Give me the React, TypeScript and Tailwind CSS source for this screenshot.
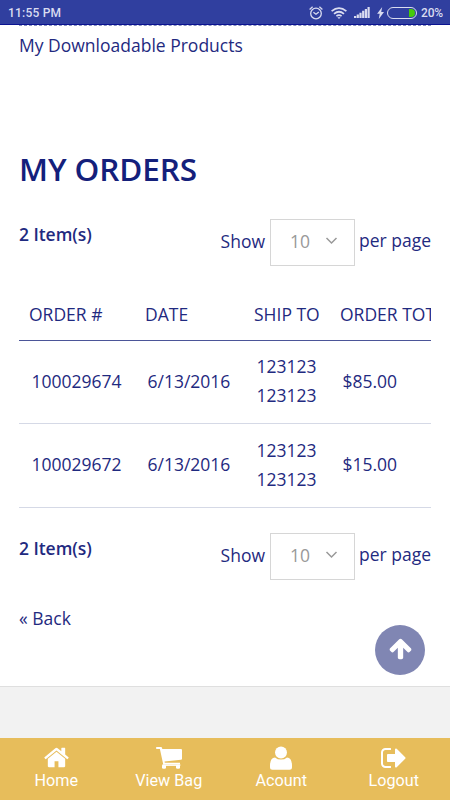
import type { ReactNode } from 'react';

const orders = [
  { id: '100029674', date: '6/13/2016', shipTo: ['123123', '123123'], total: '$85.00' },
  { id: '100029672', date: '6/13/2016', shipTo: ['123123', '123123'], total: '$15.00' },
];

function StatusBar() {
  return (
    <header className="h-[25px] bg-[#303f9f] border-b border-[#0b1391] flex items-center justify-between pl-2 pr-[7px] pt-px font-[Roboto] text-[12px] font-medium text-[#d9dcf0]">
      <span className="tracking-[0.2px]">11:55 PM</span>
      <div className="flex items-center">
        <svg className="w-[14px] h-[14px] mr-[8px]" viewBox="0 0 14 14" fill="none" stroke="currentColor" strokeWidth="1.3">
          <circle cx="7" cy="7.5" r="5.3" />
          <path d="M.6 3.4 3.6 .8M10.4 .8l3 2.6M4.4 6.2 7 8.2l2.8-2.2" />
        </svg>
        <svg className="w-4 h-3 mr-[7px]" viewBox="0 0 16 12" fill="none" stroke="currentColor" strokeWidth="1.7">
          <path d="M.6 4.2Q8-2.1 15.4 4.2M3 6.8q5-4.1 10 0M5.4 9.1q2.6-2 5.2 0" />
          <path d="M6.4 10.2h3.2L8 11.9z" fill="currentColor" stroke="none" />
        </svg>
        <svg className="w-4 h-[11px] mr-[7px]" viewBox="0 0 16 11" fill="currentColor">
          <path d="M0 9h2.2v2H0zM2.7 7.5h2.2V11H2.7zM5.4 5.7h2.2V11H5.4zM8.1 3.8h2.2V11H8.1zM10.8 2H13v9h-2.2zM13.5 0h2.2v11h-2.2z" />
        </svg>
        <svg className="w-[7px] h-3 mr-[3px]" viewBox="0 0 7 12" fill="currentColor">
          <path d="M5.2 0 .1 6.7h2.6L1.8 12 7 5H4.2z" />
        </svg>
        <div className="w-[30px] h-[12px] rounded-full border border-current flex justify-end p-px mr-1">
          <div className="w-[6px] rounded-r-full bg-[#45c90a]" />
        </div>
        <span className="tracking-[-0.2px]">20%</span>
      </div>
    </header>
  );
}

function Pager() {
  return (
    <div className="flex justify-between h-[47px]">
      <strong className="font-semibold leading-[30px] tracking-[-0.05px]">2 Item(s)</strong>
      <div className="flex items-center">
        <span className="mr-[5px] relative -top-px">Show</span>
        <div className="w-[85px] h-[47px] border-[1.5px] border-[#d6d6d6] flex items-center justify-between pl-[19px] pr-[16px] text-[#999]">
          <span className="relative -top-px">10</span>
          <svg className="w-[13px] h-[8px] relative -top-[2px]" viewBox="0 0 13 8" fill="none" stroke="currentColor" strokeWidth="1.5">
            <path d="m1.5 1 5 5 5-5" />
          </svg>
        </div>
        <span className="ml-1 relative -top-[2px]">per page</span>
      </div>
    </div>
  );
}

function NavItem({ label, children }: { label: string; children: ReactNode }) {
  return (
    <a className="flex-1 flex flex-col items-center pt-[6px]">
      <div className="h-[27px] flex items-center">{children}</div>
      <span className="leading-[20px]">{label}</span>
    </a>
  );
}

function BottomNav() {
  return (
    <nav className="h-[62px] bg-[#e7bd5b] flex text-white font-[Roboto] text-[16.2px]">
      <NavItem label="Home">
        <svg className="w-[27px] h-[27px]" viewBox="0 0 1792 1792" fill="currentColor">
          <path d="M1472 992v480q0 26-19 45t-45 19h-384v-384h-256v384h-384q-26 0-45-19t-19-45v-480q0-1 .5-3t.5-3l575-474 575 474q1 2 1 6zm223-69l-62 74q-8 9-21 11h-3q-13 0-21-7l-692-577-692 577q-12 8-24 7-13-2-21-11l-62-74q-8-10-7-23.5t11-21.5l719-599q32-26 76-26t76 26l244 204v-195q0-14 9-23t23-9h192q14 0 23 9t9 23v408l219 182q10 8 11 21.5t-7 23.5z" />
        </svg>
      </NavItem>
      <NavItem label="View Bag">
        <svg className="w-[26px] h-[22px] mt-px" viewBox="0 0 26 22" fill="currentColor">
          <path d="M.8 0H5q.8 0 1 .8L6.3 2H25q1 0 1 1v8.7q0 .9-1 1L8.5 14.4l.3 1.3H24v1.6H7.2L3.9 1.9H.8Q0 1.9 0 1 0 0 .8 0z" />
          <path d="M6.5 17.3h17.8v1.6H6.5z" />
          <rect x="6" y="17.8" width="4" height="4" rx="1.3" />
          <rect x="20" y="17.8" width="4" height="4" rx="1.3" />
        </svg>
      </NavItem>
      <NavItem label="Acount">
        <svg className="w-[22px] h-6" viewBox="0 0 22 24" fill="currentColor">
          <circle cx="11" cy="6.4" r="6" />
          <path d="M5 11.4q-5 .5-5 8.2v1.6Q0 23.7 2.5 23.7h17q2.5 0 2.5-2.5v-1.6q0-7.7-5-8.2-2.5 2.2-6 2.2t-6-2.2z" />
        </svg>
      </NavItem>
      <NavItem label="Logout">
        <svg className="w-[28px] h-[28px]" viewBox="0 0 1792 1792" fill="currentColor">
          <path d="M704 1440q0 4 1 20t.5 26.5-3 23.5-10 19.5-20.5 6.5h-320q-119 0-203.5-84.5t-84.5-203.5v-704q0-119 84.5-203.5t203.5-84.5h320q13 0 22.5 9.5t9.5 22.5q0 4 1 20t.5 26.5-3 23.5-10 19.5-20.5 6.5h-320q-66 0-113 47t-47 113v704q0 66 47 113t113 47h312l11.5 1 11.5 3 8 5.5 7 9 2 13.5zm928-544q0 26-19 45l-544 544q-19 19-45 19t-45-19-19-45v-288h-448q-26 0-45-19t-19-45v-384q0-26 19-45t45-19h448v-288q0-26 19-45t45-19 45 19l544 544q19 19 19 45z" />
        </svg>
      </NavItem>
    </nav>
  );
}

export default function App() {
  return (
    <div className="relative w-[450px] h-[800px] overflow-hidden bg-white flex flex-col font-['Open_Sans'] text-[17.5px] text-[#1f2a80]">
      <StatusBar />
      <main className="flex-1 px-[19px]">
        <div className="border-t border-dashed border-[#8790bd]" />
        <a className="block mt-[4px] h-[31px] leading-[30px]">My Downloadable Products</a>
        <h1 className="mt-[84px] h-[48px] leading-[48px] text-[31.5px] font-semibold tracking-[-0.1px] text-[#14207b]">MY ORDERS</h1>
        <div className="mt-[26px]">
          <Pager />
        </div>

        <div className="mt-[23px] overflow-hidden">
          <div className="w-[500px]">
            <div className="grid grid-cols-[116px_109px_86px_189px] h-[52px] border-b border-[#4b5598] pl-[10px] leading-[51px] whitespace-nowrap">
              <span>ORDER #</span>
              <span>DATE</span>
              <span>SHIP TO</span>
              <span>ORDER TOTAL</span>
            </div>
            {orders.map((order, i) => (
              <div
                key={order.id}
                className={`grid grid-cols-[116px_109px_86px_189px] items-center border-b border-[#d5d9e6] pl-[12.5px] pb-[2px] leading-[29px] ${i === 0 ? 'h-[83px]' : 'h-[84px]'}`}
              >
                <span>{order.id}</span>
                <span>{order.date}</span>
                <span>
                  {order.shipTo[0]}
                  <br />
                  {order.shipTo[1]}
                </span>
                <span>{order.total}</span>
              </div>
            ))}
          </div>
        </div>

        <div className="mt-[25px]">
          <Pager />
        </div>
        <a className="block mt-[23px] leading-[30px]">« Back</a>
      </main>
      <div className="h-[52px] bg-[#f2f2f2] border-t border-[#dfdfdf]" />
      <BottomNav />

      <button className="absolute left-[375px] top-[625px] w-[50px] h-[50px] rounded-full bg-[#8086b3] text-white flex items-center justify-center">
        <svg className="w-[25px] h-[25px] mb-[4px]" viewBox="0 0 1792 1792" fill="currentColor">
          <path d="M1675 971q0 51-37 90l-75 75q-38 38-91 38-54 0-90-38l-294-293v704q0 52-37.5 84.5t-90.5 32.5h-128q-53 0-90.5-32.5t-37.5-84.5v-704l-294 293q-36 38-90 38t-90-38l-75-75q-38-38-38-90 0-53 38-91l651-651q35-37 90-37 54 0 91 37l651 651q37 39 37 91z" />
        </svg>
      </button>
    </div>
  );
}
